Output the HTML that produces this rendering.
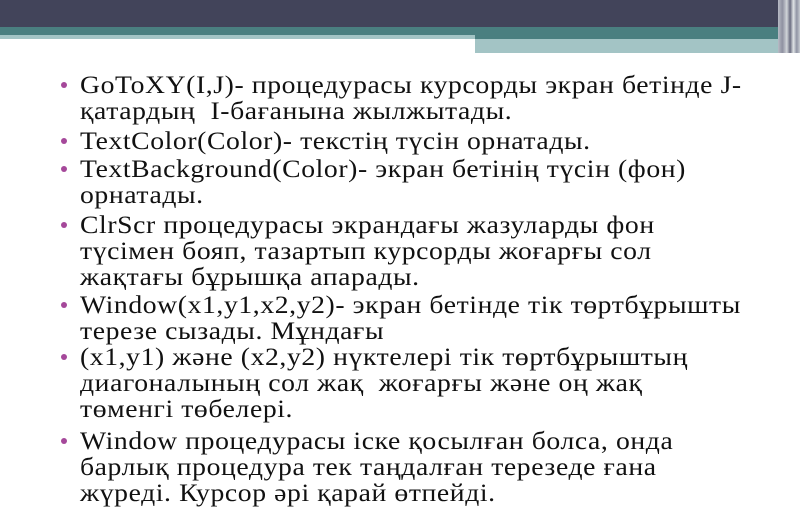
<!DOCTYPE html>
<html><head><meta charset="utf-8"><style>
body{margin:0;width:800px;height:512px;overflow:hidden;background:#fff;position:relative;font-family:"Liberation Serif",serif;}
.a{position:absolute}
.l{position:absolute;left:80px;font-size:25.5px;letter-spacing:0.55px;white-space:nowrap;color:#111;line-height:26px;transform:scaleX(1.085);transform-origin:0 0}
.b{position:absolute;left:61px;width:6px;height:6px;border-radius:50%;background:#a5489a}
</style></head><body>
<div class="a" style="left:0;top:0;width:800px;height:27px;background:#42445a"></div>
<div class="a" style="left:0;top:27px;width:800px;height:12px;background:#4a7f80"></div>
<div class="a" style="left:0;top:35px;width:475px;height:4px;background:#a3c4c5"></div>
<div class="a" style="left:475px;top:39px;width:305px;height:14px;background:#a3c4c5"></div>
<div class="a" style="left:778px;top:0;width:22px;height:53px;background:linear-gradient(90deg,#b8bcc6,#8e90a0 20%,#d0d4d8 40%,#6a6c80 55%,#e0e4e6 70%,#9094a4 85%,#c8ccd2)"></div>

<div class="b" style="top:82px"></div>
<div class="l" style="top:72px">GoToXY(I,J)- процедурасы курсорды экран бетінде J-</div>
<div class="l" style="top:98px">қатардың &nbsp;I-бағанына жылжытады.</div>
<div class="b" style="top:138px"></div>
<div class="l" style="top:128px">TextColor(Color)- текстің түсін орнатады.</div>
<div class="b" style="top:166px"></div>
<div class="l" style="top:156px">TextBackground(Color)- экран бетінің түсін (фон)</div>
<div class="l" style="top:182px">орнатады.</div>
<div class="b" style="top:222px"></div>
<div class="l" style="top:212px">ClrScr процедурасы экрандағы жазуларды фон</div>
<div class="l" style="top:238px">түсімен бояп, тазартып курсорды жоғарғы сол</div>
<div class="l" style="top:264px">жақтағы бұрышқа апарады.</div>
<div class="b" style="top:302px"></div>
<div class="l" style="top:292px">Window(x1,y1,x2,y2)- экран бетінде тік төртбұрышты</div>
<div class="l" style="top:318px">терезе сызады. Мұндағы</div>
<div class="b" style="top:354px"></div>
<div class="l" style="top:344px">(x1,y1) және (x2,y2) нүктелері тік төртбұрыштың</div>
<div class="l" style="top:370px">диагоналының сол жақ &nbsp;жоғарғы және оң жақ</div>
<div class="l" style="top:396px">төменгі төбелері.</div>
<div class="b" style="top:438px"></div>
<div class="l" style="top:428px">Window процедурасы іске қосылған болса, онда</div>
<div class="l" style="top:454px">барлық процедура тек таңдалған терезеде ғана</div>
<div class="l" style="top:480px">жүреді. Курсор әрі қарай өтпейді.</div>
</body></html>
